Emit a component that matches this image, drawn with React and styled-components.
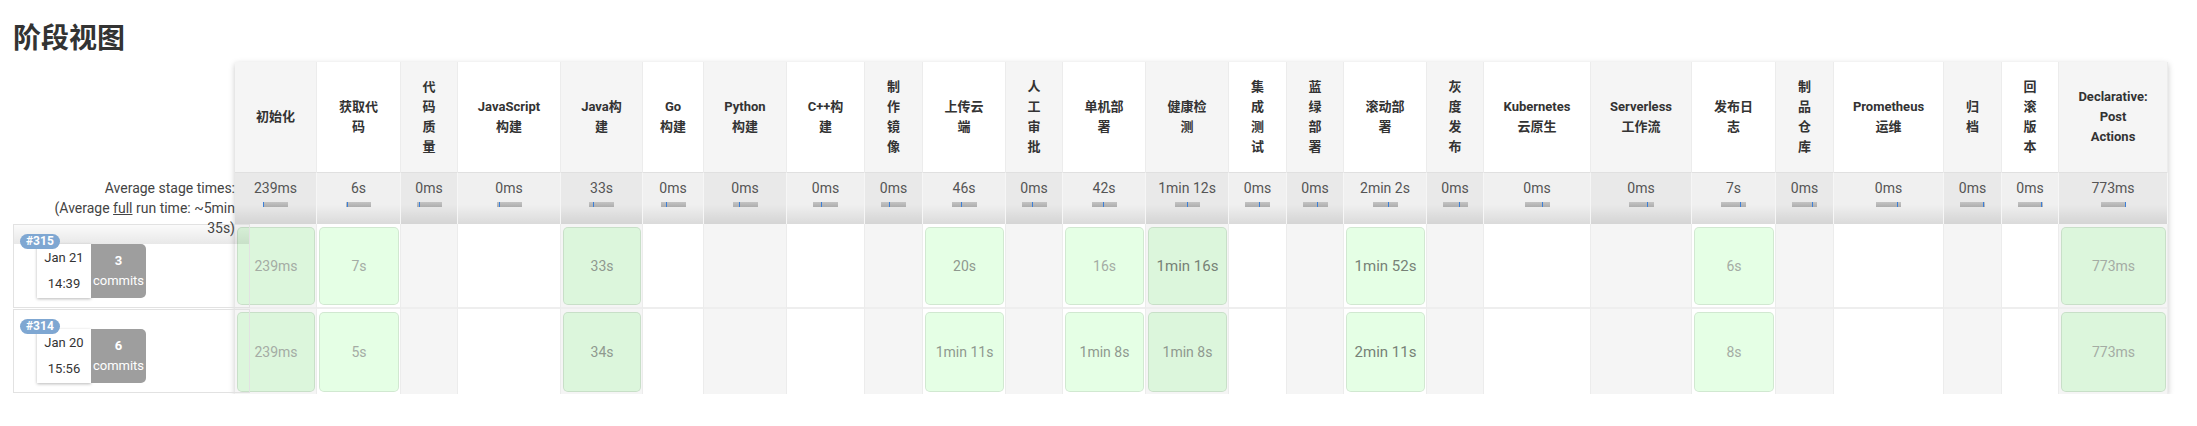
import React from 'react';
import styled, { createGlobalStyle } from 'styled-components';

const stages = [
  { name: ['初始化'], w: 82, avg: '239ms', tick: 0, runs: [['239ms', 0], ['239ms', 0]] },
  { name: ['获取代', '码'], w: 84, avg: '6s', tick: 3, runs: [['7s', 0], ['5s', 0]] },
  { name: ['代', '码', '质', '量'], w: 57, avg: '0ms', tick: 8 },
  { name: ['JavaScript', '构建'], w: 103, avg: '0ms', tick: 9 },
  { name: ['Java构', '建'], w: 82, avg: '33s', tick: 17, runs: [['33s', 1], ['34s', 1]] },
  { name: ['Go', '构建'], w: 61, avg: '0ms', tick: 21 },
  { name: ['Python', '构建'], w: 83, avg: '0ms', tick: 25 },
  { name: ['C++构', '建'], w: 78, avg: '0ms', tick: 31 },
  { name: ['制', '作', '镜', '像'], w: 58, avg: '0ms', tick: 33 },
  { name: ['上传云', '端'], w: 83, avg: '46s', tick: 37, runs: [['20s', 1], ['1min 11s', 1]] },
  { name: ['人', '工', '审', '批'], w: 57, avg: '0ms', tick: 43 },
  { name: ['单机部', '署'], w: 83, avg: '42s', tick: 47, runs: [['16s', 0], ['1min 8s', 1]] },
  { name: ['健康检', '测'], w: 83, avg: '1min 12s', tick: 51, runs: [['1min 16s', 2], ['1min 8s', 1]] },
  { name: ['集', '成', '测', '试'], w: 58, avg: '0ms', tick: 55 },
  { name: ['蓝', '绿', '部', '署'], w: 57, avg: '0ms', tick: 56 },
  { name: ['滚动部', '署'], w: 83, avg: '2min 2s', tick: 63, runs: [['1min 52s', 2], ['2min 11s', 2]] },
  { name: ['灰', '度', '发', '布'], w: 57, avg: '0ms', tick: 65 },
  { name: ['Kubernetes', '云原生'], w: 107, avg: '0ms', tick: 68 },
  { name: ['Serverless', '工作流'], w: 101, avg: '0ms', tick: 73 },
  { name: ['发布日', '志'], w: 84, avg: '7s', tick: 77, runs: [['6s', 0], ['8s', 0]] },
  { name: ['制', '品', '仓', '库'], w: 58, avg: '0ms', tick: 80 },
  { name: ['Prometheus', '运维'], w: 110, avg: '0ms', tick: 84 },
  { name: ['归', '档'], w: 58, avg: '0ms', tick: 91 },
  { name: ['回', '滚', '版', '本'], w: 57, avg: '0ms', tick: 95 },
  { name: ['Declarative:', 'Post', 'Actions'], w: 109, avg: '773ms', tick: 97, runs: [['773ms', 0], ['773ms', 0]] },
];

const builds = [
  { id: '#315', date: 'Jan 21', time: '14:39', commits: 3 },
  { id: '#314', date: 'Jan 20', time: '15:56', commits: 6 },
];

const levelColor = ['#a4aca4', '#8f998f', '#778277'];
const levelSize = ['14px', '14px', '15px'];

const GlobalStyle = createGlobalStyle`
  body {
    margin: 0;
    background: #fff;
    font-family: Roboto, "Noto Sans CJK SC", sans-serif;
    color: #333;
  }
`;

const Page = styled.div`
  padding: 18px 13px 0;
`;

const Title = styled.h2`
  margin: 0 0 8px;
  font-size: 28px;
  line-height: 36px;
  font-weight: 700;
  color: #333;
  font-family: "Noto Sans CJK SC", Roboto, sans-serif;
`;

const StageView = styled.div`
  display: flex;
  align-items: flex-start;
`;

const LeftColumn = styled.div`
  width: 222px;
  flex: none;
  position: relative;
  z-index: 2;
`;

const HeadSpacer = styled.div`
  height: 110px;
`;

const AvgLabel = styled.div`
  position: relative;
  z-index: 3;
  height: 52px;
  box-sizing: border-box;
  padding-top: 6px;
  text-align: right;
  font-size: 14px;
  line-height: 20px;
  color: #444;
  & u {
    text-decoration: underline;
  }
`;

const BuildHead = styled.div`
  position: relative;
  width: 237px;
  height: 84px;
  margin-bottom: 1px;
  box-sizing: border-box;
  border: 1px solid #e2e2e2;
  padding: 19px 0 0 23px;
  display: flex;
  background: ${({ $first }) =>
    $first
      ? 'linear-gradient(to bottom, rgba(0,0,0,0.02), rgba(0,0,0,0.09)) no-repeat top left / 100% 19px'
      : 'transparent'};
`;

const Badge = styled.span`
  position: absolute;
  left: 6px;
  top: 9px;
  z-index: 2;
  height: 15px;
  padding: 0 6px;
  border-radius: 8px;
  background: #7fa7d2;
  color: #fff;
  font-size: 12px;
  font-weight: 700;
  line-height: 15px;
`;

const DateCard = styled.div`
  width: 54px;
  height: 54px;
  background: #fff;
  box-shadow: 0 1px 3px rgba(0, 0, 0, 0.28);
  display: flex;
  flex-direction: column;
  align-items: center;
  justify-content: center;
  gap: 6px;
  font-size: 13px;
  line-height: 20px;
  color: #333;
`;

const Commits = styled.div`
  width: 55px;
  height: 54px;
  background: #9e9e9e;
  border-radius: 0 5px 5px 0;
  color: #fff;
  font-size: 13px;
  line-height: 20px;
  text-align: center;
  display: flex;
  flex-direction: column;
  justify-content: center;
  & b {
    font-weight: 700;
  }
`;

const StageTable = styled.div`
  display: grid;
  grid-template-columns: ${({ $cols }) => $cols};
  grid-template-rows: 110px 52px 85px 85px;
  box-shadow: 0 2px 6px rgba(0, 0, 0, 0.22);
  position: relative;
  z-index: 1;
`;

const HeadCell = styled.div`
  background: ${({ $alt }) => ($alt ? '#f5f5f5' : '#fff')};
  border-right: 1px solid #ececec;
  display: flex;
  flex-direction: column;
  align-items: center;
  justify-content: center;
  text-align: center;
  font-size: 13px;
  line-height: 20px;
  font-weight: 700;
  color: #333;
  white-space: nowrap;
`;

const AvgCell = styled.div`
  background-color: ${({ $alt }) => ($alt ? '#e9e9e9' : '#f0f0f0')};
  background-image: linear-gradient(to bottom, rgba(0,0,0,0) 62%, rgba(0,0,0,0.09) 100%);
  border-top: 1px solid #e0e0e0;
  border-right: 1px solid #f6f6f6;
  box-sizing: border-box;
  padding-top: 5px;
  display: flex;
  flex-direction: column;
  align-items: center;
  font-size: 14px;
  line-height: 20px;
  color: #555;
  white-space: nowrap;
`;

const AvgBar = styled.div`
  position: relative;
  width: 25px;
  height: 5px;
  margin-top: 4px;
  background: linear-gradient(to bottom, #c4c4c4, #adadad);
`;

const Tick = styled.span`
  position: absolute;
  top: 0;
  width: 1px;
  height: 5px;
  background: #3b7fd9;
`;

const BodyCell = styled.div`
  background: ${({ $alt }) => ($alt ? '#f5f5f5' : '#fff')};
  border-right: 1px solid #ececec;
  border-bottom: ${({ $last }) => ($last ? 'none' : '2px solid #eeeeee')};
  box-sizing: border-box;
  padding: 3px 1px 2px 2px;
  display: flex;
`;

const RunBox = styled.div`
  flex: 1;
  border: 1px solid rgba(0, 0, 0, 0.09);
  border-radius: 5px;
  background: rgba(0, 255, 0, 0.1);
  display: flex;
  align-items: center;
  justify-content: center;
  font-size: ${({ $level }) => levelSize[$level]};
  color: ${({ $level }) => levelColor[$level]};
  white-space: nowrap;
`;

const App = () => {
  const cols = stages.map((s) => `${s.w}px`).join(' ');
  return (
    <Page>
      <GlobalStyle />
      <Title>阶段视图</Title>
      <StageView>
        <LeftColumn>
          <HeadSpacer />
          <AvgLabel>
            Average stage times:
            <br />
            (Average <u>full</u> run time: ~5min
            <br />
            35s)
          </AvgLabel>
          {builds.map((b, i) => (
            <BuildHead key={b.id} $first={i === 0}>
              <Badge>{b.id}</Badge>
              <DateCard>
                <span>{b.date}</span>
                <span>{b.time}</span>
              </DateCard>
              <Commits>
                <b>{b.commits}</b>
                <span>commits</span>
              </Commits>
            </BuildHead>
          ))}
        </LeftColumn>
        <StageTable $cols={cols}>
          {stages.map((s, i) => (
            <HeadCell key={`h${i}`} $alt={i % 2 === 0}>
              {s.name.map((line) => (
                <span key={line}>{line}</span>
              ))}
            </HeadCell>
          ))}
          {stages.map((s, i) => (
            <AvgCell key={`a${i}`} $alt={i % 2 === 0}>
              <span>{s.avg}</span>
              <AvgBar>
                <Tick style={{ left: `${s.tick}%` }} />
              </AvgBar>
            </AvgCell>
          ))}
          {builds.map((b, r) =>
            stages.map((s, i) => (
              <BodyCell key={`b${r}-${i}`} $alt={i % 2 === 0} $last={r === builds.length - 1}>
                {s.runs && <RunBox $level={s.runs[r][1]}>{s.runs[r][0]}</RunBox>}
              </BodyCell>
            ))
          )}
        </StageTable>
      </StageView>
    </Page>
  );
};

export default App;
